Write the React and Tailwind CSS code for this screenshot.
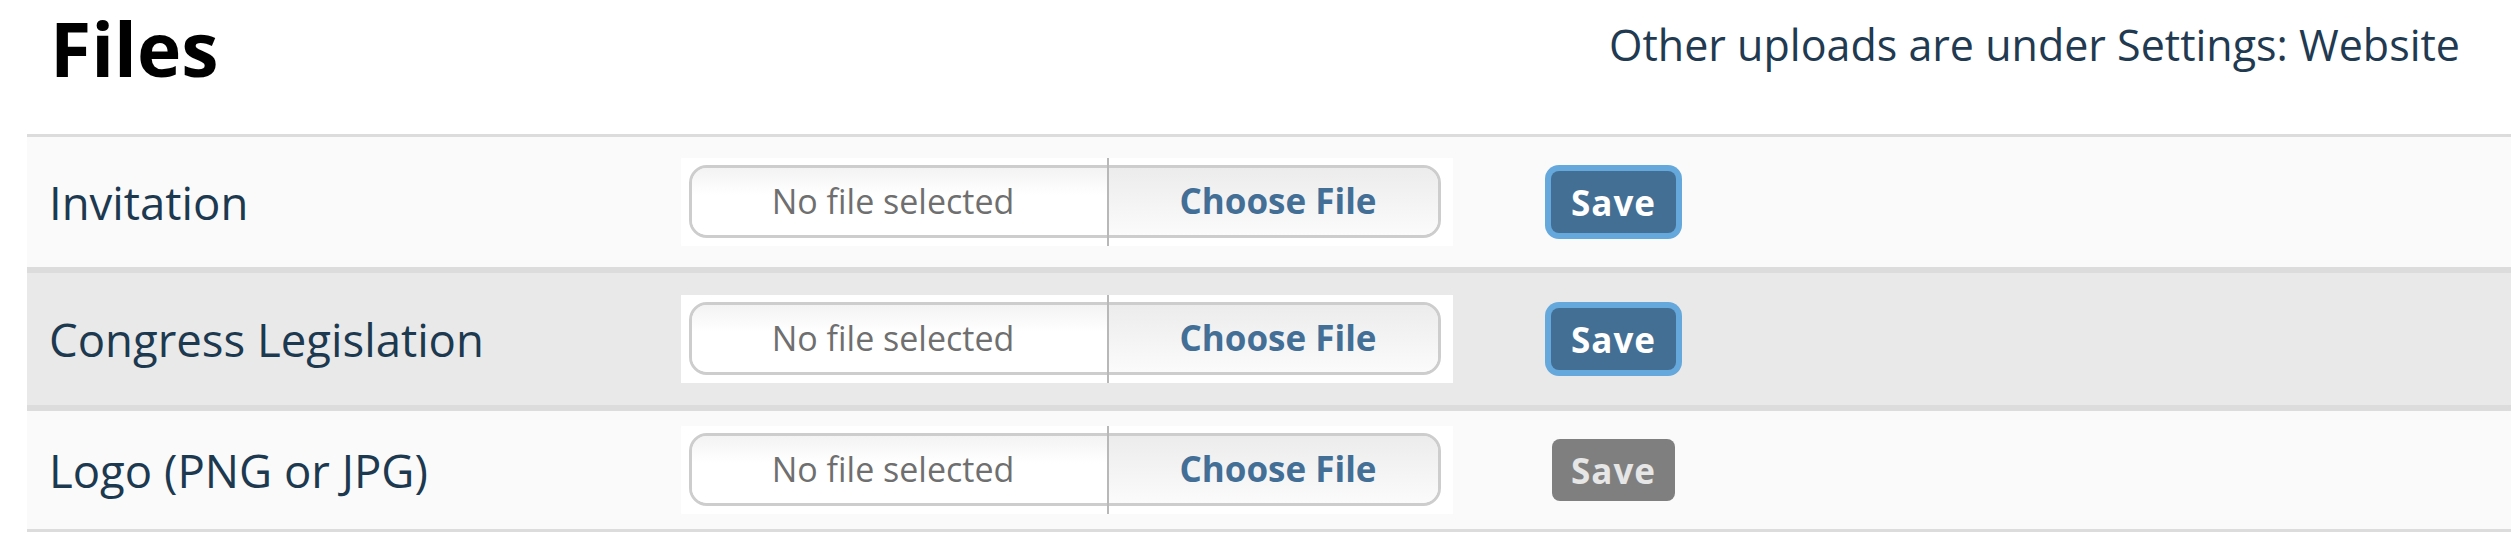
const rows = [
    { label: "Invitation", bg: "bg-[#fafafa]", pad: "py-[21px]", active: true },
    { label: "Congress Legislation", bg: "bg-[#e9e9e9]", pad: "py-[22px]", active: true },
    { label: "Logo (PNG or JPG)", bg: "bg-[#fafafa]", pad: "py-[15px]", active: false },
];

const FilePicker = () => (
    <div className="relative w-[772px] h-[88px] bg-white pl-[8px] pr-[12px] pt-[7px] pb-[8px]">
        <div className="flex h-full rounded-[18px] border-[3px] border-[#cdcdcd] overflow-hidden shadow-[inset_0_3px_4px_rgba(0,0,0,0.06)]">
            <div className="w-[416px] pr-[14px] flex items-center justify-center bg-gradient-to-b from-[#f3f3f3] to-white to-40%">
                <span className="text-[34px] text-[#6f6f6f]">No file selected</span>
            </div>
            <div className="flex-1 pl-[10px] flex items-center justify-center bg-gradient-to-b from-[#ececec] to-[#fbfbfb]">
                <span className="text-[35px] font-bold text-[#436f96]">Choose File</span>
            </div>
        </div>
        {/* divider runs the full height of the white box */}
        <div className="absolute top-0 bottom-0 left-[426px] w-[2px] bg-[#b8b8b8]" />
    </div>
);

export default function App() {
    return (
        <div className="w-[2511px] h-[537px] bg-white overflow-hidden font-['Open_Sans',sans-serif]">
            <div className="ml-[27px]">
                <header className="h-[134px] flex justify-between items-start">
                    <h1 className="pl-[23px] pt-[3px] text-[75px] leading-[1.2] font-bold text-black">Files</h1>
                    <p className="pr-[51px] pt-[19px] text-[43px] leading-[1.2] text-[#1f3a51]">
                        Other uploads are under Settings: Website
                    </p>
                </header>

                <div className="border-t-[3px] border-[#dcdcdc]">
                    {rows.map((row) => (
                        <div
                            key={row.label}
                            className={`flex items-center border-b-[3px] border-t-[3px] first:border-t-0 border-[#dcdcdc] ${row.bg} ${row.pad}`}
                        >
                            <div className="w-[654px] pl-[22px] text-[45.5px] text-[#1d3950] leading-[1.2]">
                                {row.label}
                            </div>
                            <FilePicker />
                            <div className="ml-[98px]">
                                {row.active ? (
                                    <button className="w-[125px] h-[62px] rounded-[8px] bg-[#436f94] ring-[6px] ring-[#65a8dc] text-white text-[35px] font-bold leading-none tracking-[1px]">
                                        Save
                                    </button>
                                ) : (
                                    <button className="ml-[1px] w-[123px] h-[62px] rounded-[8px] bg-[#7f7f7f] text-[#e6e6e6] text-[35px] font-bold leading-none tracking-[1px]">
                                        Save
                                    </button>
                                )}
                            </div>
                        </div>
                    ))}
                </div>
            </div>
        </div>
    );
}
